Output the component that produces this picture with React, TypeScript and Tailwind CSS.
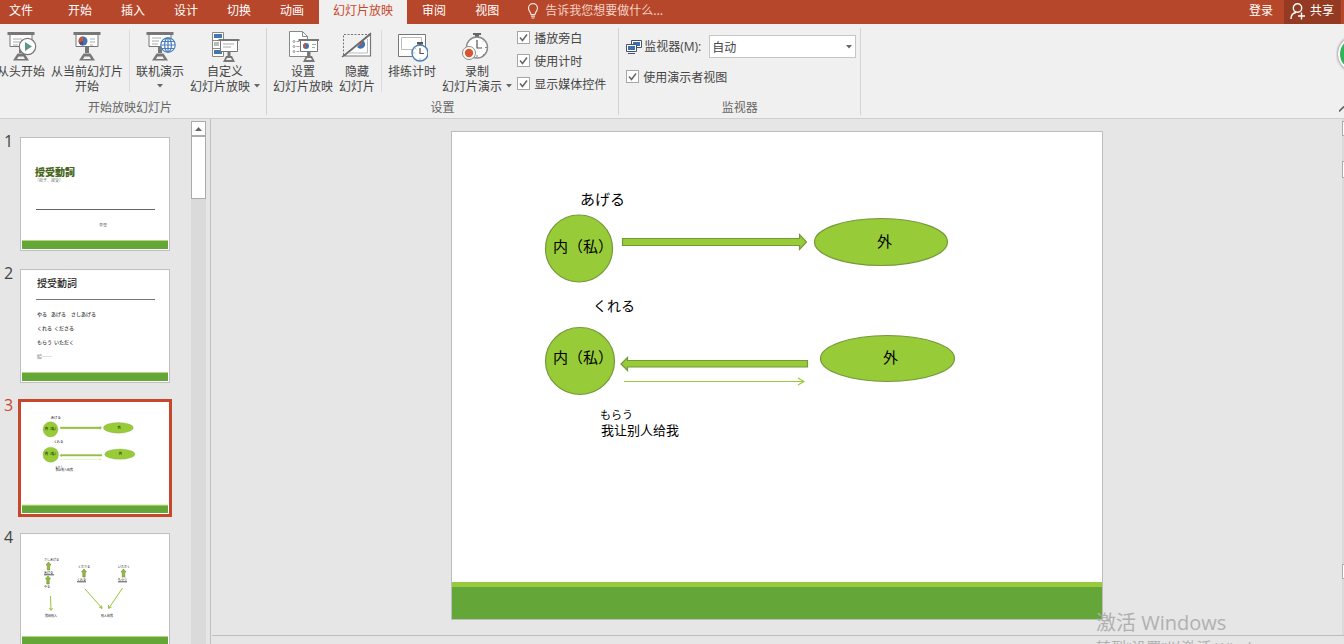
import type { ReactNode } from 'react';

const TABS = ['开始', '插入', '设计', '切换', '动画', '幻灯片放映', '审阅', '视图'];
const ACTIVE_TAB = '幻灯片放映';

/* ---------- Icons ---------- */

const Screen = () => (
    <g transform="translate(1 0)">
        <path d="M4 4.500h22v12H4z" fill="#fff" stroke="#777" />
        <path d="M1.500 2h27v3h-27z" fill="#777" />
        <path d="M13 17h4v6h-4z" fill="#777" />
        <path d="M11.500 23.500h7l4.500 7H7z" fill="#777" />
        <path d="M12.500 26.500h5l1.500 2.500h-8z" fill="#f0f0f0" />
    </g>
);

const FromStartIcon = () => (
    <svg width="32" height="32" viewBox="0 0 32 32">
        <Screen />
        <path d="M8 9h9M8 12h7M8 15h5" stroke="#aaa" />
        <circle cx="22.500" cy="16.500" r="8.200" fill="#fff" stroke="#777" strokeWidth="1.200" />
        <path d="M20 12l7 4.500-7 4.500z" fill="#5c9a80" />
    </svg>
);

const FromCurrentIcon = () => (
    <svg width="32" height="32" viewBox="0 0 32 32">
        <Screen />
        <circle cx="12" cy="11" r="4.500" fill="#3f73b3" />
        <path d="M12 11V6.500A4.500 4.500 0 0 0 8 13z" fill="#d35230" />
        <path d="M12 11L8 13a4.500 4.500 0 0 0 4 2.500z" fill="#5a4a78" />
        <path d="M19 9h5M19 12h5M19 15h3" stroke="#aaa" />
    </svg>
);

const OnlineIcon = () => (
    <svg width="32" height="32" viewBox="0 0 32 32">
        <Screen />
        <path d="M8 8h9M8 11h7M8 14h6" stroke="#aaa" />
        <g fill="none" stroke="#4a7ebb" strokeWidth="1.200">
            <circle cx="24" cy="15" r="7.200" fill="#fff" />
            <ellipse cx="24" cy="15" rx="3.400" ry="7.200" />
            <path d="M24 8v14M17 15h14M18 11.500h12M18 18.500h12" />
        </g>
    </svg>
);

const CustomShowIcon = () => (
    <svg width="32" height="32" viewBox="0 0 32 32">
        <path d="M3.500 2.500h11v24h-11zM3.500 10.500h11M3.500 18.500h11" fill="#fff" stroke="#888" />
        <path d="M5 4h8v4H5zM5 20h8v4H5z" fill="#4477ad" />
        <path d="M5 12h5v4H5z" fill="#bbb" />
        <path d="M11.500 10.500h17v11h-17z" fill="#fff" stroke="#777" />
        <path d="M9.500 9h21v2h-21z" fill="#777" />
        <path d="M14 14h11M14 17h8" stroke="#aaa" />
        <path d="M18.500 22h3v4h-3zM17 26h6l3 6H14z" fill="#777" />
        <path d="M18 28h4l1 2h-6z" fill="#f0f0f0" />
    </svg>
);

const SetupIcon = () => (
    <svg width="32" height="32" viewBox="0 0 32 32">
        <path d="M2.500 1.500h13l5 5v20h-18z" fill="#fff" stroke="#888" />
        <path d="M15.500 1.500v5h5" fill="none" stroke="#888" />
        <g fill="none" stroke="#999">
            <circle cx="7" cy="11.500" r="1" />
            <circle cx="7" cy="16.500" r="1" />
            <circle cx="7" cy="21.500" r="1" />
            <path d="M9.500 11.500h3M9.500 16.500h3M9.500 21.500h3" />
        </g>
        <path d="M13.500 10.500h17v11h-17z" fill="#fff" stroke="#777" />
        <path d="M11.500 9h21v2h-21z" fill="#777" />
        <circle cx="19" cy="16" r="3" fill="#3f73b3" />
        <path d="M19 16v-3a3 3 0 0 0-2 5z" fill="#d35230" />
        <path d="M25 14.500h4M25 17.500h3" stroke="#aaa" />
        <path d="M20.500 22h3v4h-3zM19 26h6l3 6H16z" fill="#777" />
        <path d="M20 28h4l1 2h-6z" fill="#f0f0f0" />
    </svg>
);

const HideIcon = () => (
    <svg width="32" height="32" viewBox="0 0 32 32">
        <path d="M2.500 25V4.500H29" fill="none" stroke="#777" strokeDasharray="2 1.500" />
        <path d="M3 26L29.500 4.500v21.500z" fill="#fff" stroke="#777" strokeWidth="1.200" />
        <path d="M7 23h19.500V9" fill="none" stroke="#bbb" />
        <path d="M22 10.500a4.500 4.500 0 1 1-6 6.500z" fill="#3f73b3" />
        <path d="M18 14l3-2.500v4z" fill="#d35230" />
        <path d="M1 27L30 3" stroke="#666" strokeWidth="1.200" />
    </svg>
);

const RehearseIcon = () => (
    <svg width="32" height="32" viewBox="0 0 32 32">
        <path d="M2.500 4.500h27v22h-27z" fill="#fff" stroke="#777" />
        <path d="M5.500 7.500h20v12h-20z" fill="#fff" stroke="#bbb" />
        <path d="M21 12h6v2.500h-2V16h-2v-1.500h-2z" fill="#555" />
        <circle cx="24" cy="23" r="8" fill="#fff" stroke="#4a7ebb" strokeWidth="1.400" />
        <path d="M24 18v5.500h4" fill="none" stroke="#555" strokeWidth="1.200" />
        <path d="M24 28.500v1M17.500 23h1M19.500 18.500l.7.700" stroke="#4a7ebb" />
    </svg>
);

const RecordIcon = () => (
    <svg width="32" height="32" viewBox="0 0 32 32">
        <path d="M12 3h8v2h-2v3h-4V5h-2z" fill="#666" />
        <circle cx="16" cy="17.500" r="10.500" fill="#fff" stroke="#888" strokeWidth="1.400" />
        <path d="M16 10v8h5" fill="none" stroke="#555" strokeWidth="1.200" />
        <path d="M24 17.500h2M16 25v2M22 11.500l1-1M22 24l1 1" stroke="#888" />
        <circle cx="8" cy="23" r="6.500" fill="#fff" stroke="#888" />
        <circle cx="8" cy="23" r="4.200" fill="#d9572f" />
    </svg>
);

const MonitorIcon = () => (
    <svg width="16" height="16" viewBox="0 0 16 16">
        <path d="M5.500 1.500h10v7h-10z" fill="#fff" stroke="#44546a" />
        <path d="M7 3h7v4H7z" fill="#3f6fae" />
        <path d="M.500 5.500h10v7H.500z" fill="#fff" stroke="#44546a" />
        <path d="M2 7h7v4H2z" fill="#3f6fae" />
        <path d="M2 14.500h7" stroke="#44546a" />
    </svg>
);

const Caret = () => (
    <svg width="6" height="4" viewBox="0 0 6 4">
        <path d="M0 0h6L3 3.500z" fill="#666" />
    </svg>
);

/* ---------- Ribbon ---------- */

type RibbonButtonProps = { icon: ReactNode; label: string; second?: string; menu?: boolean };

const RibbonButton = ({ icon, label, second, menu }: RibbonButtonProps) => (
    <button className="flex shrink-0 flex-col items-center px-[3px] hover:bg-[#fcd9cd]">
        <span className="mb-px">{icon}</span>
        <span>{label}</span>
        <span className="flex h-[15px] items-center gap-1">
            {second}
            {menu && <Caret />}
        </span>
    </button>
);

const Divider = () => <div className="mx-[3px] h-[62px] w-px shrink-0 bg-[#dcdcdc]" />;

const RibbonGroup = ({ title, className = '', children }: { title: string; className?: string; children: ReactNode }) => (
    <section className="flex shrink-0 flex-col justify-between border-r border-[#d4d4d4]">
        <div className={`flex pt-0.5 ${className}`}>{children}</div>
        <h2 className="pb-px text-center text-[#666]">{title}</h2>
    </section>
);

const CheckOption = ({ label }: { label: string }) => (
    <label className="flex items-center gap-1">
        <span className="relative size-[13px]">
            <input type="checkbox" defaultChecked className="peer block size-[13px] appearance-none border border-[#a6a6a6] bg-white" />
            <svg className="pointer-events-none invisible absolute inset-0 peer-checked:visible" width="13" height="13" viewBox="0 0 13 13">
                <path d="M3 6.500l2.500 3L10 3.500" fill="none" stroke="#666" strokeWidth="1.500" />
            </svg>
        </span>
        {label}
    </label>
);

const TabBar = () => (
    <header className="flex h-6 shrink-0 bg-[#b7472a] text-white">
        <nav className="flex gap-px">
            <button className="pr-5 pb-1.5 pl-[9px]">文件</button>
            {TABS.map((tab) => (
                <button
                    key={tab}
                    className={tab === ACTIVE_TAB ? 'bg-[#f0f0f0] px-[14px] pb-1.5 text-[#c8472a]' : 'px-[14px] pb-1.5'}
                >
                    {tab}
                </button>
            ))}
        </nav>
        <label className="ml-[14px] flex items-center gap-1.5 pb-1.5">
            <svg width="12" height="16" viewBox="0 0 12 16" fill="none" stroke="#fbe3dc" strokeWidth="1.200" className="mt-1">
                <path d="M4 11.500C4 9 1.500 8 1.500 5.200a4.500 4.500 0 0 1 9 0C10.500 8 8 9 8 11.500zM4 13.200h4M4.500 15h3" />
            </svg>
            <input
                type="text"
                aria-label="告诉我您想要做什么"
                placeholder="告诉我您想要做什么..."
                className="w-40 bg-transparent outline-none placeholder:text-[#f6d3c8]"
            />
        </label>
        <div className="ml-auto flex pr-[3px]">
            <button className="px-[11px] pb-1.5">登录</button>
            <button className="flex items-center gap-1 bg-[#943a23] pr-[7px] pb-1.5 pl-1.5">
                <svg width="16" height="17" viewBox="0 0 16 17" fill="none" stroke="#fff" strokeWidth="1.400" className="mt-1">
                    <circle cx="7.500" cy="5" r="4.200" />
                    <path d="M1 16c0-4 2-6 5-6.500M8 13h7M11.500 9.500v7" />
                </svg>
                共享
            </button>
        </div>
    </header>
);

const Ribbon = () => (
    <div className="relative flex h-[95px] shrink-0 border-b border-[#cfcfcf] bg-[#f0f0f0] pt-1 pb-[3px] text-[#444]">
        <div className="-ml-1.5 flex">
            <RibbonGroup title="开始放映幻灯片" className="pr-[3px]">
                <RibbonButton icon={<FromStartIcon />} label="从头开始" />
                <RibbonButton icon={<FromCurrentIcon />} label="从当前幻灯片" second="开始" />
                <Divider />
                <RibbonButton icon={<OnlineIcon />} label="联机演示" menu />
                <RibbonButton icon={<CustomShowIcon />} label="自定义" second="幻灯片放映" menu />
            </RibbonGroup>
        </div>
        <RibbonGroup title="设置" className="pr-3 pl-[3px]">
            <RibbonButton icon={<SetupIcon />} label="设置" second="幻灯片放映" />
            <RibbonButton icon={<HideIcon />} label="隐藏" second="幻灯片" />
            <Divider />
            <RibbonButton icon={<RehearseIcon />} label="排练计时" />
            <RibbonButton icon={<RecordIcon />} label="录制" second="幻灯片演示" menu />
            <div className="ml-0.5 flex flex-col gap-2">
                <CheckOption label="播放旁白" />
                <CheckOption label="使用计时" />
                <CheckOption label="显示媒体控件" />
            </div>
        </RibbonGroup>
        <RibbonGroup title="监视器" className="pr-1 pl-[7px]">
            <div className="flex flex-col gap-[11px] pt-[5px]">
                <div className="flex items-center">
                    <MonitorIcon />
                    <label htmlFor="monitor" className="w-[67px] pl-0.5 font-['Open_Sans','Noto_Sans_CJK_SC',sans-serif] whitespace-nowrap">
                        监视器(M):
                    </label>
                    <div className="relative">
                        <select id="monitor" className="block h-[23px] w-[147px] appearance-none border border-[#c6c6c6] bg-white px-0.5">
                            <option>自动</option>
                        </select>
                        <span className="pointer-events-none absolute top-2.5 right-1">
                            <Caret />
                        </span>
                    </div>
                </div>
                <CheckOption label="使用演示者视图" />
            </div>
        </RibbonGroup>
        {/* collapse arrow and floating badge, both run off the window edge */}
        <button aria-label="折叠功能区" className="absolute right-0 bottom-1.5 w-[5px] overflow-hidden">
            <svg width="10" height="6" viewBox="0 0 10 6">
                <path d="M0 5.500L5 .500l5 5" fill="none" stroke="#666" strokeWidth="1.600" />
            </svg>
        </button>
        <div className="absolute top-2.5 right-0 h-10 w-2 overflow-hidden">
            <div className="mt-0.5 ml-0.5 size-9 rounded-full border-2 border-white bg-[#2fb457] shadow-[0_0_3px_#555]" />
        </div>
    </div>
);

/* ---------- Slides ---------- */

const DiagramSlide = () => (
    <svg viewBox="0 0 650 487" preserveAspectRatio="none" className="block size-full" fontFamily='"Noto Sans CJK JP", sans-serif'>
        <g fill="#97cb38" stroke="#74983a" strokeWidth="1.200">
            <circle cx="127" cy="116.500" r="33.500" />
            <ellipse cx="128" cy="229" rx="34.500" ry="33.500" />
            <ellipse cx="429" cy="110" rx="66.500" ry="23.500" />
            <ellipse cx="435.500" cy="226.500" rx="67" ry="23" />
            <path d="M170.500 106.500h177v-4l7 7.500-7 7.500v-4h-177z" />
            <path d="M355.500 228.500h-180v-3l-6.500 6.500 6.500 6.500v-3.500h180z" />
            <path d="M172 249.500h179M346 246l6 3.500-6 3.500" fill="none" stroke="#97cb38" />
        </g>
        <g fontSize="15">
            <text x="128" y="73">あげる</text>
            <text x="101" y="120">内（私）</text>
            <text x="425" y="115">外</text>
            <text x="101" y="231">内（私）</text>
            <text x="431" y="231">外</text>
        </g>
        <text x="141" y="179" fontSize="14">くれる</text>
        <text x="148" y="287" fontSize="11">もらう</text>
        <text x="149" y="303" fontSize="13" fontFamily='"Noto Sans CJK SC", sans-serif'>我让别人给我</text>
        <path d="M0 450h650v5H0z" fill="#97ca3d" />
        <path d="M0 455h650v32H0z" fill="#64a637" />
    </svg>
);

const SmallSlide = ({ children }: { children: ReactNode }) => (
    <svg viewBox="0 0 146 110" className="block size-full" fontFamily='"Noto Sans CJK JP", sans-serif'>
        {children}
        <path d="M0 101h146v1H0z" fill="#b5d97a" />
        <path d="M0 102h146v8H0z" fill="#64a637" />
    </svg>
);

const TitleSlide = () => (
    <SmallSlide>
        <text x="13" y="37" fontSize="10" fontWeight="900" fill="#48661c">授受動詞</text>
        <text x="13" y="43" fontSize="4" fill="#777">（授予、接受）</text>
        <path d="M14 70.500h119" stroke="#666" />
        <text x="77" y="88" fontSize="4" fill="#777">李雪</text>
    </SmallSlide>
);

const VerbSlide = () => (
    <SmallSlide>
        <text x="15" y="16" fontSize="10" fontWeight="500" fill="#222">授受動詞</text>
        <path d="M14 28.500h119" stroke="#777" />
        <g fontSize="5" fontWeight="500" fill="#333">
            <text x="15" y="45">やる</text>
            <text x="29" y="45">あげる</text>
            <text x="49" y="45">さしあげる</text>
            <text x="15" y="59">くれる</text>
            <text x="32" y="59">くださる</text>
            <text x="15" y="73">もらう</text>
            <text x="32" y="73">いただく</text>
            <text x="15" y="87" fill="#999">給……</text>
        </g>
    </SmallSlide>
);

const UpArrow = ({ x, y }: { x: number; y: number }) => (
    <path transform={`translate(${x} ${y})`} d="M0 0l2.500 3H1.200v5h-2.400V3h-1.300z" fill="#8fbf35" stroke="#6d9130" strokeWidth=".6" />
);

const ChainSlide = () => (
    <SmallSlide>
        <g fontSize="3" fill="#111">
            <text x="22" y="26">さしあげる</text>
            <text x="22" y="39">あげる</text>
            <text x="22" y="53">やる</text>
            <text x="56" y="32.500">くださる</text>
            <text x="55" y="46">くれる</text>
            <text x="96" y="32.500">いただく</text>
            <text x="96" y="46">もらう</text>
            <text x="23" y="82">我给别人</text>
            <text x="79" y="82">别人给我</text>
        </g>
        <path d="M22 39.800h10M55 46.800h9M96 46.800h9" stroke="#222" strokeWidth=".8" />
        <UpArrow x={26.5} y={27} />
        <UpArrow x={26} y={41} />
        <UpArrow x={62} y={34} />
        <UpArrow x={101.5} y={34} />
        <g fill="none" stroke="#97c43c">
            <path d="M28.500 61l.5 14M27.500 73l1.500 2.500 1.500-2.500" />
            <path d="M63 54l17 19M77 72l3 1.500-.5-3" />
            <path d="M100.500 53L87 73M86.500 70v3.500l3-1.500" />
        </g>
    </SmallSlide>
);

const SLIDES = [TitleSlide, VerbSlide, DiagramSlide, ChainSlide];
const CURRENT = 2;

const SlidePanel = () => (
    <aside className="flex w-[211px] shrink-0 border-r border-[#bdbdbd] pt-0.5 pr-1">
        <ol className="flex min-w-0 flex-1 flex-col gap-[18px] overflow-hidden pt-4 pl-1 font-['Open_Sans',sans-serif] text-base/2">
            {SLIDES.map((Slide, i) => (
                <li key={i} className={i === CURRENT ? 'flex text-[#c8472a]' : 'flex text-[#444]'}>
                    <span className="w-4">{i + 1}</span>
                    <button
                        aria-label={`幻灯片 ${i + 1}`}
                        className={
                            i === CURRENT
                                ? 'h-[114px] w-[150px] border border-[#c8472a] bg-white p-px ring-2 ring-[#c8472a]'
                                : 'h-[114px] w-[150px] border border-[#bfbfbf] bg-white p-px'
                        }
                    >
                        <Slide />
                    </button>
                </li>
            ))}
        </ol>
        <div className="flex w-[15px] flex-col bg-[#dadada]">
            <button aria-label="向上滚动" className="grid h-[15px] place-items-center border border-[#ababab] bg-white">
                <svg width="7" height="4" viewBox="0 0 7 4">
                    <path d="M0 4h7L3.500 0z" fill="#666" />
                </svg>
            </button>
            <div className="h-[63px] border border-[#ababab] bg-white" />
        </div>
    </aside>
);

const Editor = () => (
    <main className="flex min-w-0 flex-1 flex-col pl-px">
        <div className="flex min-h-0 flex-1">
            <div className="flex min-w-0 flex-1 justify-center pt-3 pb-[15px]">
                <div className="aspect-4/3 h-full border border-[#bdbdbd] bg-white">
                    <DiagramSlide />
                </div>
            </div>
            <div className="flex w-0.5 flex-col bg-[#dadada] pt-0.5 pb-14">
                <div className="h-[15px] border-y border-l border-[#ababab] bg-white" />
                <div className="mt-[25px] h-[17px] border-y border-l border-[#ababab] bg-white" />
                <div className="mt-auto h-[15px] border-y border-l border-[#ababab] bg-white" />
            </div>
        </div>
        <div className="h-[9px] shrink-0 border-t border-[#bdbdbd]" />
    </main>
);

export default function App() {
    return (
        <div className="relative flex h-screen flex-col overflow-hidden bg-[#e6e6e6] font-['Noto_Sans_CJK_SC',sans-serif] text-xs/[15px]">
            <TabBar />
            <Ribbon />
            <div className="flex min-h-0 flex-1">
                <SlidePanel />
                <Editor />
            </div>
            <div className="pointer-events-none absolute top-[609px] left-[1096px] font-['Open_Sans','Noto_Sans_CJK_SC',sans-serif] whitespace-nowrap text-[#b0b0b0]">
                <p className="text-xl/7">激活 Windows</p>
                <p className="text-[15px]/5">转到“设置”以激活 Windows。</p>
            </div>
        </div>
    );
}
